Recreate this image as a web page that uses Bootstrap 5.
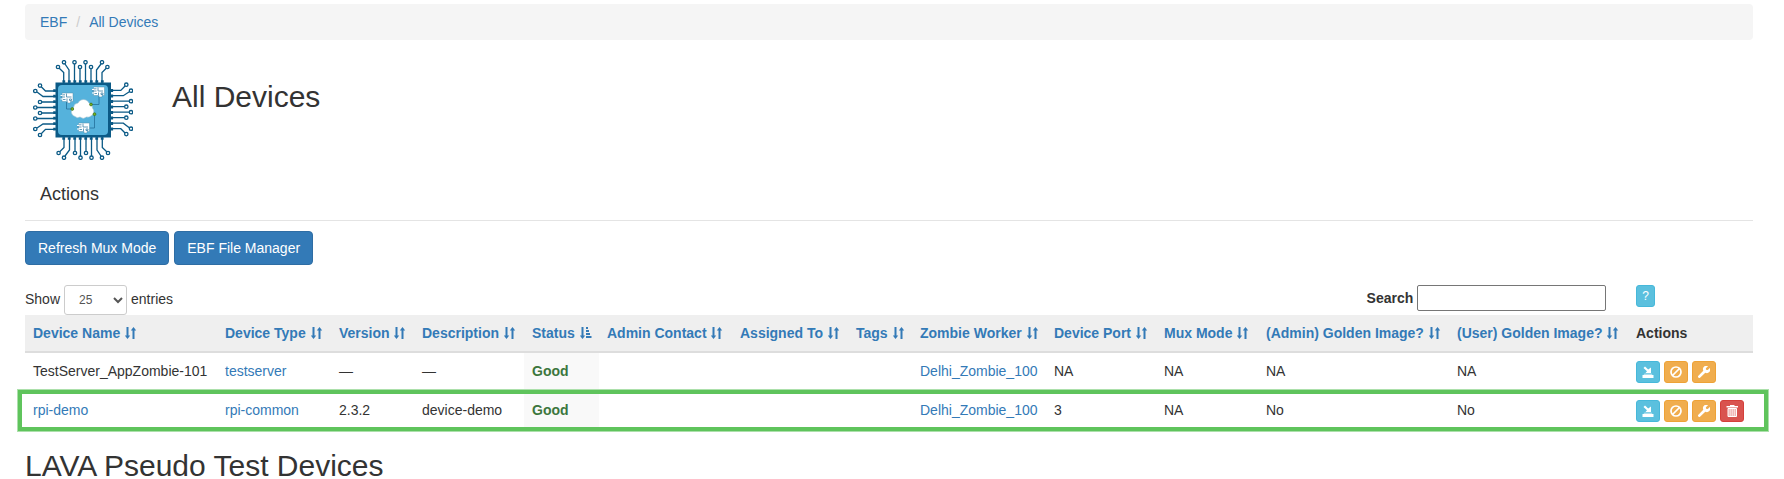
<!DOCTYPE html>
<html lang="en">
<head>
<meta charset="utf-8">
<meta name="viewport" content="width=device-width, initial-scale=1">
<title>All Devices</title>
<link rel="stylesheet" href="https://cdn.jsdelivr.net/npm/bootstrap@5.3.0/dist/css/bootstrap.min.css">
<style>
  body { font-family: "Liberation Sans", Arial, sans-serif; font-size: 14px; line-height: 20px; color: #333; }
  a { color: #337ab7; text-decoration: none; }
  .page { padding: 4px 31px 0 25px; }
  .breadcrumb { --bs-breadcrumb-padding-x: 15px; --bs-breadcrumb-padding-y: 8px; --bs-breadcrumb-bg: #f5f5f5; --bs-breadcrumb-border-radius: 4px; --bs-breadcrumb-item-padding-x: 9px; --bs-breadcrumb-divider-color: #ccc; --bs-breadcrumb-margin-bottom: 20px; }
  .title { font-size: 30px; line-height: 33px; font-weight: 400; margin: 0; }
  .masthead { gap: 39px; padding-left: 8px; }
  .masthead .title { margin-top: 20px; }
  .logo { width: 100px; height: 100px; flex: none; }
  .subtitle { font-size: 18px; line-height: 20px; font-weight: 400; margin: 24px 0 16px; padding-left: 15px; }
  .rule { margin: 0 0 10px; border-color: #e4e4e4; opacity: 1; }
  .toolbar { gap: 5px; }
  .btn { --bs-btn-font-size: 14px; --bs-btn-line-height: 20px; --bs-btn-padding-x: 12px; --bs-btn-padding-y: 6px; --bs-btn-border-radius: 4px; }
  .btn-primary { --bs-btn-bg: #337ab7; --bs-btn-border-color: #2e6da4; }
  .btn-xs { --bs-btn-font-size: 12px; --bs-btn-line-height: 18px; --bs-btn-padding-x: 5px; --bs-btn-padding-y: 1px; --bs-btn-border-radius: 3px; --bs-btn-color: #fff; display: block; height: 22px; }
  .btn-xs svg { display: block; width: 12px; height: 12px; }
  .btn-info { --bs-btn-bg: #5bc0de; --bs-btn-border-color: #46b8da; }
  .btn-warning { --bs-btn-bg: #f0ad4e; --bs-btn-border-color: #eea236; }
  .btn-danger { --bs-btn-bg: #d9534f; --bs-btn-border-color: #d43f3a; }
  .controls { margin-top: 20px; }
  .controls label { line-height: 20px; }
  .length-group label { padding-top: 4px; }
  .length { width: 63px; height: 30px; padding: 5px 10px; font-size: 12px; color: #555; background: #fff; border: 1px solid #ccc; border-radius: 3px; }
  .search { padding-right: 98px; gap: 30px; }
  .search input { width: 189px; height: 26px; border: 1px solid #767676; border-radius: 2px; padding: 1px 2px; }
  .devices { position: relative; }
  .devices table { margin: 0; color: #333; --bs-table-color: #333; --bs-table-bg: transparent; }
  .devices th, .devices td { padding: 8px 0 8px 8px; white-space: nowrap; vertical-align: top; }
  .devices .table th { background: #efefef; border-bottom: 2px solid #ddd; line-height: 20px; }
  .devices td { border: 0; border-bottom: 1px solid transparent; height: 39px; }
  .devices .table > tbody > tr > .state { background: #f9f9f9; color: #3c763d; font-weight: 700; }
  .sort { width: 12px; height: 12px; margin-left: 1px; vertical-align: -1px; fill: currentColor; }
  .marker { position: absolute; left: -7px; right: -15px; bottom: 0; height: 41px; border: 4px solid #5fc45c; box-shadow: 0 0 0 1px #ace0ab; pointer-events: none; }
  .section { margin-top: 22px; line-height: 26px; }
</style>
</head>
<body>
<svg class="d-none" aria-hidden="true">
  <symbol id="sort" viewBox="0 0 12 12"><path d="M1.500 0h2v8.500h1.700L2.500 12-.2 8.500h1.700zM7.500 12h2V3.500h1.700L8.500 0 5.800 3.500h1.700z"/></symbol>
  <symbol id="sort-asc" viewBox="0 0 12 12"><path d="M1.500 0h2v8.500h1.700L2.500 12-.2 8.500h1.700zM6 0h2v2H6zM6 3h3v2H6zM6 6h4v2H6zM6 9h5.500v2H6z"/></symbol>
  <symbol id="save" viewBox="0 0 12 12"><path fill="#fff" d="M.5 9h11v3H.5zM2.500 7.800h7l1 .7h-9zM1.500 2L3 .5l3.200 3L9 1.500V7H3.500l1.500-1.700z"/></symbol>
  <symbol id="ban" viewBox="0 0 12 12"><g fill="none" stroke="#fff" stroke-width="1.700"><circle cx="6" cy="6" r="5"/><path d="M2.500 9.500l7-7"/></g></symbol>
  <symbol id="wrench" viewBox="0 0 12 12"><path fill="#fff" d="M10 .2A3.400 3.400 0 0 0 5.300 4.700L.4 9.700a1.200 1.200 0 0 0 1.900 1.900L7.300 6.700A3.400 3.400 0 0 0 11.800 2L9.800 4 8 3.800 7.900 2.200z"/></symbol>
  <symbol id="trash" viewBox="0 0 12 12"><path fill="#fff" d="M4 0h4.500v1H12v1.500H.5V1H4z"/><path fill="#f0b4b2" stroke="#fff" d="M2 3.500h8.500v8H2z"/><path stroke="#fff" d="M4.200 3v9M6.300 3v9M8.400 3v9" stroke-width=".6"/></symbol>
</svg>

<div class="page">
  <nav aria-label="breadcrumb">
    <ol class="breadcrumb">
      <li class="breadcrumb-item"><a href="#">EBF</a></li>
      <li class="breadcrumb-item"><a href="#">All Devices</a></li>
    </ol>
  </nav>

  <header class="masthead d-flex">
    <svg class="logo" viewBox="8 10 100 100" role="img" aria-label="EBF">
      <defs>
        <g id="pins" fill="none" stroke="#0b5a86" stroke-width="1.300">
          <path d="M38.700 33V22.500L34 18M44 33V20l-4-6M49.500 33V14M55 33V19M60.500 33V14M66 33V19M71.500 33V20l4.500-6M77 33v-10.500l4.500-4.500"/>
          <path stroke-width="2.600" stroke-dasharray="2.800 2.700" d="M37.400 31.500H79"/>
          <g fill="#fff"><circle cx="33" cy="17" r="1.700"/><circle cx="39" cy="12.300" r="1.700"/><circle cx="49.500" cy="12.300" r="1.700"/><circle cx="55" cy="17" r="1.700"/><circle cx="60.500" cy="12.300" r="1.700"/><circle cx="66" cy="17" r="1.700"/><circle cx="77" cy="12.300" r="1.700"/><circle cx="82.400" cy="17" r="1.700"/></g>
        </g>
        <g id="board">
          <path fill="#fff" stroke="#4f8fae" stroke-width=".5" d="M1.500 0h11v8.500H10V10H7V8.500H1.500z"/>
          <path fill="none" stroke="#fff" d="M0 2.500h2M0 6h2"/>
          <path fill="none" stroke="#3f84a8" stroke-width=".8" d="M0 4h4.500M2 1.800h2.500M6 .5v3.500h5M9 6h2v1.500H9zM6.500 5.500V8M2.500 6.500h2.500"/>
        </g>
      </defs>
      <use href="#pins"/><use href="#pins" transform="rotate(90 58.300 60)"/><use href="#pins" transform="rotate(180 58 60)"/><use href="#pins" transform="rotate(270 58 60)"/>
      <path fill="#0b5a86" d="M30.500 32.500h55.500v55H30.500z"/>
      <rect x="33" y="35" width="50" height="50" rx="4" fill="#55b2dc"/>
      <path fill="none" stroke="#23709a" stroke-width=".8" d="M41.500 52v7H47M74 46v8.500h-7M63 78h6.500V64"/>
      <use href="#board" x="35.500" y="43"/><use href="#board" x="67" y="37"/><use href="#board" x="52" y="73"/>
      <path fill="#fff" stroke="#8fb6c8" stroke-width=".5" d="M50 66.500a5 5 0 0 1-1.500-9 5 5 0 0 1 4.500-4.500 6 6 0 0 1 11 0 5 5 0 0 1 3.500 5 5 5 0 0 1-1.500 8 5 5 0 0 1-4.500 1 5 5 0 0 1-6.500 0 4 4 0 0 1-5-.5z"/>
      <g fill="#79b51c" stroke="#396b1c" stroke-width=".7"><circle cx="47.300" cy="59" r="1.400"/><circle cx="66" cy="54.500" r="1.400"/><circle cx="69.500" cy="64.200" r="1.400"/></g>
    </svg>
    <h1 class="title">All Devices</h1>
  </header>

  <h2 class="subtitle">Actions</h2>
  <hr class="rule">
  <div class="toolbar d-flex">
    <button type="button" class="btn btn-primary">Refresh Mux Mode</button>
    <button type="button" class="btn btn-primary">EBF File Manager</button>
  </div>

  <div class="controls d-flex justify-content-between align-items-start">
    <div class="length-group d-flex align-items-start gap-1">
      <label for="len">Show</label>
      <select id="len" class="length"><option>10</option><option selected>25</option><option>100</option></select>
      <label for="len">entries</label>
    </div>
    <div class="search d-flex align-items-start">
      <div class="d-flex align-items-center gap-1">
        <label for="q" class="fw-bold">Search</label>
        <input id="q" type="text">
      </div>
      <button type="button" class="btn btn-info btn-xs">?</button>
    </div>
  </div>

  <div class="devices">
    <table class="table">
      <colgroup><col width="192"><col width="114"><col width="83"><col width="110"><col width="75"><col width="133"><col width="116"><col width="64"><col width="134"><col width="110"><col width="102"><col width="191"><col width="179"><col width="125"></colgroup>
      <thead>
        <tr>
          <th><a href="#">Device Name <svg class="sort"><use href="#sort"/></svg></a></th>
          <th><a href="#">Device Type <svg class="sort"><use href="#sort"/></svg></a></th>
          <th><a href="#">Version <svg class="sort"><use href="#sort"/></svg></a></th>
          <th><a href="#">Description <svg class="sort"><use href="#sort"/></svg></a></th>
          <th><a href="#">Status <svg class="sort"><use href="#sort-asc"/></svg></a></th>
          <th><a href="#">Admin Contact <svg class="sort"><use href="#sort"/></svg></a></th>
          <th><a href="#">Assigned To <svg class="sort"><use href="#sort"/></svg></a></th>
          <th><a href="#">Tags <svg class="sort"><use href="#sort"/></svg></a></th>
          <th><a href="#">Zombie Worker <svg class="sort"><use href="#sort"/></svg></a></th>
          <th><a href="#">Device Port <svg class="sort"><use href="#sort"/></svg></a></th>
          <th><a href="#">Mux Mode <svg class="sort"><use href="#sort"/></svg></a></th>
          <th><a href="#">(Admin) Golden Image? <svg class="sort"><use href="#sort"/></svg></a></th>
          <th><a href="#">(User) Golden Image? <svg class="sort"><use href="#sort"/></svg></a></th>
          <th>Actions</th>
        </tr>
      </thead>
      <tbody>
        <tr>
          <td>TestServer_AppZombie-101</td><td><a href="#">testserver</a></td><td>—</td><td>—</td><td class="state">Good</td><td></td><td></td><td></td>
          <td><a href="#">Delhi_Zombie_100</a></td><td>NA</td><td>NA</td><td>NA</td><td>NA</td>
          <td><div class="d-flex gap-1">
            <button type="button" class="btn btn-info btn-xs" aria-label="Reserve"><svg><use href="#save"/></svg></button>
            <button type="button" class="btn btn-warning btn-xs" aria-label="Disable"><svg><use href="#ban"/></svg></button>
            <button type="button" class="btn btn-warning btn-xs" aria-label="Configure"><svg><use href="#wrench"/></svg></button>
          </div></td>
        </tr>
        <tr>
          <td><a href="#">rpi-demo</a></td><td><a href="#">rpi-common</a></td><td>2.3.2</td><td>device-demo</td><td class="state">Good</td><td></td><td></td><td></td>
          <td><a href="#">Delhi_Zombie_100</a></td><td>3</td><td>NA</td><td>No</td><td>No</td>
          <td><div class="d-flex gap-1">
            <button type="button" class="btn btn-info btn-xs" aria-label="Reserve"><svg><use href="#save"/></svg></button>
            <button type="button" class="btn btn-warning btn-xs" aria-label="Disable"><svg><use href="#ban"/></svg></button>
            <button type="button" class="btn btn-warning btn-xs" aria-label="Configure"><svg><use href="#wrench"/></svg></button>
            <button type="button" class="btn btn-danger btn-xs" aria-label="Delete"><svg><use href="#trash"/></svg></button>
          </div></td>
        </tr>
      </tbody>
    </table>
    <div class="marker"></div>
  </div>

  <h2 class="title section">LAVA Pseudo Test Devices</h2>
</div>
<script src="https://cdn.jsdelivr.net/npm/bootstrap@5.3.0/dist/js/bootstrap.bundle.min.js"></script>
</body>
</html>
